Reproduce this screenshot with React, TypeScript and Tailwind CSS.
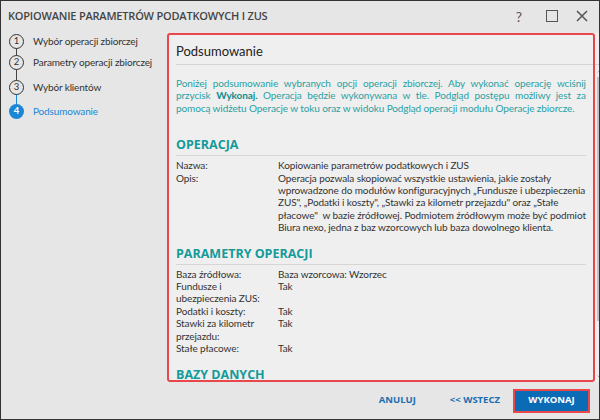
import React from 'react';

const steps = [
  { n: 1, label: 'Wybór operacji zbiorczej', h: 'h-[21px]' },
  { n: 2, label: 'Parametry operacji zbiorczej', h: 'h-[25px]' },
  { n: 3, label: 'Wybór klientów', h: 'h-[24px]' },
  { n: 4, label: 'Podsumowanie', h: 'h-[24px]' },
];

function Row({ label, children }: { label: React.ReactNode; children: React.ReactNode }) {
  return (
    <div className="flex">
      <div className="w-[102px] shrink-0 pr-[4px]">{label}</div>
      <div className="flex-1 min-w-0">{children}</div>
    </div>
  );
}

function Section({ title }: { title: string }) {
  return (
    <div className="border-b border-[#d6d6d6] pb-[1px] mb-[3px]">
      <h3 className="text-[12.5px] font-bold text-[#139a9a] leading-[18px] tracking-normal font-['Open_Sans',sans-serif]">
        {title}
      </h3>
    </div>
  );
}

export default function App() {
  return (
    <div className="w-[600px] h-[420px] border border-[#333] bg-[#e6e6e6] flex flex-col text-[#333] font-['Lato',sans-serif] overflow-hidden">
      {/* ================= TITLE ================= */}
      <div className="h-[30px] shrink-0 flex items-center pl-[7px] pr-[8px]">
        <h1 className="text-[11px] font-semibold tracking-[-0.2px] text-[#444] flex-1 font-['Open_Sans',sans-serif]">
          KOPIOWANIE PARAMETRÓW PODATKOWYCH I ZUS
        </h1>
        <span className="text-[14px] text-[#555] w-[14px] text-center mr-[20px]">?</span>
        <span className="w-[12px] h-[12px] border-[1.5px] border-[#555] mr-[18px]"></span>
        <svg width="12" height="12" viewBox="0 0 12 12" className="mr-[3px]">
          <path d="M1 1 L11 11 M11 1 L1 11" stroke="#555" strokeWidth="1.5" />
        </svg>
      </div>

      <div className="flex flex-1 min-h-0 pt-[2px]">
        {/* ================= STEPS ================= */}
        <div className="w-[166px] shrink-0 pl-[8px] pt-[1px]">
          {steps.map((s, i) => (
            <div key={s.n} className={`${s.h} flex items-start relative`}>
              <div
                className={`w-[15px] h-[15px] rounded-full flex items-center justify-center text-[9.5px] shrink-0 z-10 ${
                  s.n === 4
                    ? 'bg-[#1a86d6] text-white font-bold'
                    : 'border border-[#333] bg-[#e6e6e6] text-[#333]'
                }`}
              >
                {s.n}
              </div>
              {i < steps.length - 1 && (
                <div
                  className={`absolute left-[7px] top-[14px] w-px bottom-[-1px] ${
                    i === 2 ? 'bg-[#1a86d6]' : 'bg-[#444]'
                  }`}
                ></div>
              )}
              <span
                className={`ml-[9px] text-[10px] tracking-[-0.15px] leading-[15px] whitespace-nowrap ${
                  s.n === 4 ? 'text-[#1a86d6]' : 'text-[#333]'
                }`}
              >
                {s.label}
              </span>
            </div>
          ))}
        </div>

        {/* ================= PANEL ================= */}
        <div className="flex-1 mr-[4px] relative bg-[#efefef] flex flex-col min-h-0">
          <div className="pl-[9px] pt-[11px] pr-[3px]">
            <div className="border-b border-[#d4d4d4] pb-[5px] text-[13px] leading-[15px] text-[#222]">
              Podsumowanie
            </div>
          </div>

          <div className="flex flex-1 min-h-0">
            <div className="flex-1 pl-[9px] pr-[9px] pt-[12px] overflow-hidden text-[10px] tracking-[-0.1px] leading-[12.4px]">
              <p className="text-[#2a9fa3] text-justify mb-[22px]">
                Poniżej podsumowanie wybranych opcji operacji zbiorczej. Aby wykonać operację wciśnij
                przycisk <b className="text-[#128c8c]">Wykonaj.</b> Operacja będzie wykonywana w tle.
                Podgląd postępu możliwy jest za pomocą widżetu Operacje w toku oraz w widoku Podgląd
                operacji modułu Operacje zbiorcze.
              </p>

              <Section title="OPERACJA" />
              <Row label="Nazwa:">Kopiowanie parametrów podatkowych i ZUS</Row>
              <Row label="Opis:">
                <div className="whitespace-nowrap">
                  Operacja pozwala skopiować wszystkie ustawienia, jakie zostały
                  <br />
                  wprowadzone do modułów konfiguracyjnych „Fundusze i ubezpieczenia
                  <br />
                  ZUS", „Podatki i koszty", „Stawki za kilometr przejazdu" oraz „Stałe
                  <br />
                  płacowe"&nbsp; w bazie źródłowej. Podmiotem źródłowym może być podmiot
                  <br />
                  Biura nexo, jedna z baz wzorcowych lub baza dowolnego klienta.
                </div>
              </Row>

              <div className="mt-[11px]">
                <Section title="PARAMETRY OPERACJI" />
              </div>
              <Row label="Baza źródłowa:">Baza wzorcowa: Wzorzec</Row>
              <Row label="Fundusze i ubezpieczenia ZUS:">Tak</Row>
              <Row label="Podatki i koszty:">Tak</Row>
              <Row label="Stawki za kilometr przejazdu:">Tak</Row>
              <Row label="Stałe płacowe:">Tak</Row>

              <div className="mt-[11px]">
                <Section title="BAZY DANYCH" />
              </div>
            </div>

            {/* scrollbar */}
            <div className="w-[12px] shrink-0 flex flex-col items-center pt-[3px] pb-[2px]">
              <svg width="8" height="5" viewBox="0 0 8 5">
                <path d="M0.5 4.5 L4 1 L7.5 4.5" stroke="#aaa" fill="none" />
              </svg>
              <div className="w-[8px] h-[244px] bg-[#c2c2c2] mt-[4px]"></div>
              <div className="flex-1"></div>
              <svg width="8" height="5" viewBox="0 0 8 5">
                <path d="M0.5 0.5 L4 4 L7.5 0.5" stroke="#aaa" fill="none" />
              </svg>
            </div>
          </div>

          {/* annotation outline */}
          <div className="absolute left-0 top-0 bottom-0 right-[12px] border-2 border-[#e8474b] rounded-[3px] pointer-events-none"></div>
        </div>
      </div>

      {/* ================= FOOTER ================= */}
      <div className="h-[37px] shrink-0 flex items-center justify-end pr-[9px] text-[9.5px] font-bold font-['Open_Sans',sans-serif]">
        <button className="text-[#1d6eb0]">ANULUJ</button>
        <button className="text-[#1d6eb0] ml-[34px]">&lt;&lt; WSTECZ</button>
        <button className="ml-[13px] w-[77px] h-[24px] bg-[#0b6cb5] text-white border-2 border-[#e8474b]">
          WYKONAJ
        </button>
      </div>
    </div>
  );
}
